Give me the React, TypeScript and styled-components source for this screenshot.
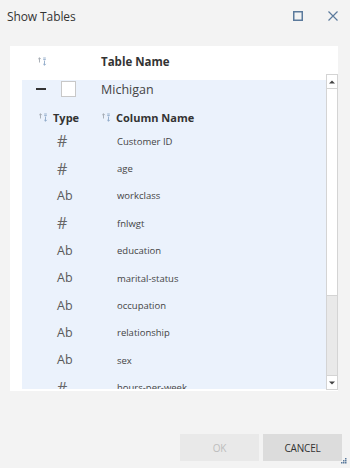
import styled, { createGlobalStyle } from 'styled-components'

const GlobalStyle = createGlobalStyle`
  * {
    margin: 0;
    padding: 0;
    box-sizing: border-box;
  }
  body {
    background: #f3f3f3;
    font-family: "Open Sans", "Noto Sans", sans-serif;
    color: #333;
  }
`

const Dialog = styled.div`
  position: relative;
  width: 350px;
  height: 468px;
  display: flex;
  flex-direction: column;
  background: #f3f3f3;
`

const TitleBar = styled.div`
  height: 32px;
  display: flex;
  align-items: center;
  padding-left: 7px;
`

const Title = styled.h1`
  flex: 1;
  font-size: 12px;
  font-weight: 400;
  color: #333;
  letter-spacing: -0.1px;
`

const TitleButton = styled.button`
  width: 35px;
  height: 24px;
  border: none;
  background: transparent;
  display: flex;
  align-items: center;
  justify-content: center;
  color: #5b7a9c;
`

const Panel = styled.div`
  margin: 14px 0 0 10px;
  width: 328px;
  height: 345px;
  background: #fff;
  display: flex;
  flex-direction: column;
`

const HeaderRow = styled.div`
  height: 28px;
  display: flex;
  align-items: center;
  padding: 2px 0 0 27px;
`

const HeaderText = styled.span<{ $left: number }>`
  margin-left: ${({ $left }) => $left}px;
  font-size: 11.5px;
  font-weight: 700;
  color: #333;
`

const Body = styled.div`
  flex: 1;
  display: flex;
  min-height: 0;
`

const ListArea = styled.div`
  flex: 1;
  padding: 6px 0 2px 12px;
  overflow: hidden;
`

const Block = styled.div`
  height: 100%;
  background: #ebf2fc;
  overflow: hidden;
`

const TableRow = styled.div`
  height: 18px;
  display: flex;
  align-items: center;
  padding-left: 14px;
`

const Minus = styled.span`
  width: 10px;
  height: 2px;
  background: #333;
`

const Checkbox = styled.span`
  margin-left: 15px;
  width: 15px;
  height: 16px;
  background: #fff;
  border: 1px solid #c8c8c8;
`

const TableName = styled.span`
  margin-left: 25px;
  font-size: 12.5px;
  color: #444;
`

const SubHeader = styled.div`
  height: 29.5px;
  display: flex;
  align-items: flex-end;
  padding: 0 0 4px 16px;
`

const SubHeaderText = styled.span<{ $width?: number }>`
  display: inline-block;
  width: ${({ $width }) => ($width ? `${$width}px` : 'auto')};
  margin-left: 5px;
  font-size: 11px;
  font-weight: 700;
  color: #333;
  line-height: 13px;
`

const SortWrap = styled.span`
  display: inline-flex;
  align-items: center;
  height: 13px;
`

const DataRow = styled.div`
  height: 27.4px;
  display: flex;
  align-items: center;
`

const TypeCell = styled.span<{ $kind: 'num' | 'text' }>`
  width: 95px;
  padding-left: 35px;
  font-family: "Open Sans", "Noto Sans", sans-serif;
  font-size: ${({ $kind }) => ($kind === 'num' ? '16px' : '12.5px')};
  color: ${({ $kind }) => ($kind === 'num' ? '#666' : '#595959')};
  line-height: 16px;
`

const NameCell = styled.span`
  font-size: 9.5px;
  color: #444;
`

const Scrollbar = styled.div`
  width: 12px;
  height: 316px;
  display: flex;
  flex-direction: column;
  background: #e9e9e9;
  border: 1px solid #d4d4d4;
`

const ScrollButton = styled.div`
  height: 14px;
  background: #fff;
  border-bottom: 1px solid #d4d4d4;
  display: flex;
  align-items: center;
  justify-content: center;

  &:last-child {
    border-bottom: none;
    border-top: 1px solid #d4d4d4;
  }
`

const Thumb = styled.div`
  height: 207px;
  background: #fff;
  border-bottom: 1px solid #d4d4d4;
`

const Track = styled.div`
  flex: 1;
`

const Footer = styled.div`
  margin-top: auto;
  display: flex;
  justify-content: flex-end;
  gap: 4px;
  padding: 0 8px 7px 0;
`

const FooterButton = styled.button<{ $disabled?: boolean }>`
  width: 79px;
  height: 27px;
  border: none;
  font-family: "Open Sans", "Noto Sans", sans-serif;
  font-size: 10px;
  letter-spacing: -0.2px;
  background: ${({ $disabled }) => ($disabled ? '#e9e9e9' : '#dcdcdc')};
  color: ${({ $disabled }) => ($disabled ? '#bdbdbd' : '#333')};
`

const Grip = styled.svg`
  position: absolute;
  right: 3px;
  bottom: 3px;
`

const SortIcon = () => (
  <svg width="10" height="9" viewBox="0 0 10 9">
    <path d="M2.5 0.8 L2.5 5.5 M1.2 2.1 L2.5 0.8 L3.8 2.1" stroke="#a2a8b0" strokeWidth="0.9" fill="none" />
    <path d="M6.2 1 H8.8 M6.2 2.6 H8.8 M7.5 3.6 V8.2 M6.2 6.9 L7.5 8.2 L8.8 6.9" stroke="#8fa9c8" strokeWidth="0.9" fill="none" />
  </svg>
)

const columns: { kind: 'num' | 'text'; name: string }[] = [
  { kind: 'num', name: 'Customer ID' },
  { kind: 'num', name: 'age' },
  { kind: 'text', name: 'workclass' },
  { kind: 'num', name: 'fnlwgt' },
  { kind: 'text', name: 'education' },
  { kind: 'text', name: 'marital-status' },
  { kind: 'text', name: 'occupation' },
  { kind: 'text', name: 'relationship' },
  { kind: 'text', name: 'sex' },
  { kind: 'num', name: 'hours-per-week' },
]

export default function App() {
  return (
    <Dialog>
      <GlobalStyle />
      <TitleBar>
        <Title>Show Tables</Title>
        <TitleButton aria-label="Maximize">
          <svg width="10" height="10" viewBox="0 0 10 10">
            <rect x="0.75" y="0.75" width="8.5" height="8.5" fill="none" stroke="currentColor" strokeWidth="1.5" />
          </svg>
        </TitleButton>
        <TitleButton aria-label="Close">
          <svg width="10" height="10" viewBox="0 0 10 10">
            <path d="M0.5 0.5 L9.5 9.5 M9.5 0.5 L0.5 9.5" stroke="currentColor" strokeWidth="1.2" />
          </svg>
        </TitleButton>
      </TitleBar>

      <Panel>
        <HeaderRow>
          <SortWrap>
            <SortIcon />
          </SortWrap>
          <HeaderText $left={54}>Table Name</HeaderText>
        </HeaderRow>
        <Body>
          <ListArea>
            <Block>
              <TableRow>
                <Minus />
                <Checkbox />
                <TableName>Michigan</TableName>
              </TableRow>
              <SubHeader>
                <SortWrap>
                  <SortIcon />
                </SortWrap>
                <SubHeaderText $width={48}>Type</SubHeaderText>
                <SortWrap>
                  <SortIcon />
                </SortWrap>
                <SubHeaderText>Column Name</SubHeaderText>
              </SubHeader>
              {columns.map((c) => (
                <DataRow key={c.name}>
                  <TypeCell $kind={c.kind}>{c.kind === 'num' ? '#' : 'Ab'}</TypeCell>
                  <NameCell>{c.name}</NameCell>
                </DataRow>
              ))}
            </Block>
          </ListArea>
          <Scrollbar>
            <ScrollButton>
              <svg width="6" height="4" viewBox="0 0 6 4">
                <path d="M0 3.5 L3 0.5 L6 3.5 Z" fill="#444" />
              </svg>
            </ScrollButton>
            <Thumb />
            <Track />
            <ScrollButton>
              <svg width="6" height="4" viewBox="0 0 6 4">
                <path d="M0 0.5 L3 3.5 L6 0.5 Z" fill="#444" />
              </svg>
            </ScrollButton>
          </Scrollbar>
        </Body>
      </Panel>

      <Footer>
        <FooterButton $disabled>OK</FooterButton>
        <FooterButton>CANCEL</FooterButton>
      </Footer>
      <Grip width="7" height="7" viewBox="0 0 7 7">
        <rect x="5" y="0" width="1.5" height="1.5" fill="#5b7a9c" />
        <rect x="3" y="2" width="1.5" height="1.5" fill="#5b7a9c" />
        <rect x="5" y="2" width="1.5" height="1.5" fill="#5b7a9c" />
        <rect x="1" y="4" width="1.5" height="1.5" fill="#5b7a9c" />
        <rect x="3" y="4" width="1.5" height="1.5" fill="#5b7a9c" />
        <rect x="5" y="4" width="1.5" height="1.5" fill="#5b7a9c" />
      </Grip>
    </Dialog>
  )
}
